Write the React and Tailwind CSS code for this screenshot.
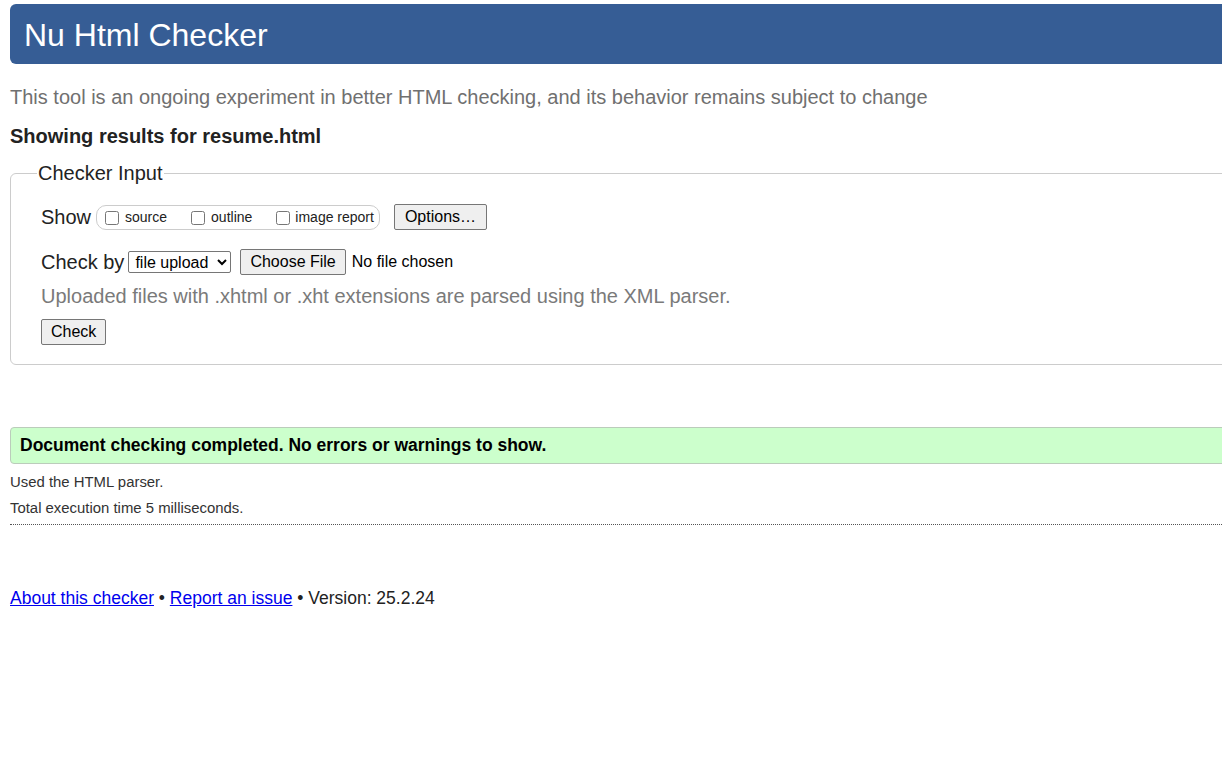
import React from "react";

const FONT = { fontFamily: '"Liberation Sans", Arial, sans-serif' };

export default function App() {
  return (
    <div className="w-[1222px] h-[763px] overflow-hidden bg-white" style={FONT}>
      <div className="w-[1260px] pl-[10px] pt-[4px]">

        {/* header */}
        <div className="h-[60px] bg-[#365d95] rounded-l-[6px] flex items-center pl-[14px]">
          <h1 className="text-[32px] text-white leading-none pt-[1px]">Nu Html Checker</h1>
        </div>

        <p className="mt-[22px] text-[20px] leading-[23px] text-[#707070]">
          This tool is an ongoing experiment in better HTML checking, and its behavior remains subject to change
        </p>

        <p className="mt-[16px] text-[20px] leading-[23px] font-bold text-[#222]">Showing results for resume.html</p>

        {/* checker input */}
        <fieldset className="mt-[14px] border border-[#cccccc] rounded-l-[6px] pl-[26px] pb-[19px] pt-[10px]">
          <legend className="px-[1px] text-[20px] leading-[23px] text-[#222]">Checker Input</legend>

          <div className="pl-[4px]">
            <div className="flex items-center h-[30px] mt-[7px]">
              <span className="text-[20px] text-[#222] mr-[5px]">Show</span>
              <div className="flex items-center h-[25px] border border-[#cccccc] rounded-[10px] pl-[8px] pr-[5px] text-[14px] text-[#222]">
                <label className="flex items-end mr-[24px]">
                  <input type="checkbox" className="w-[14px] h-[14px] m-0 mr-[6px] mb-[3px]" />
                  source
                </label>
                <label className="flex items-end mr-[24px]">
                  <input type="checkbox" className="w-[14px] h-[14px] m-0 mr-[6px] mb-[3px]" />
                  outline
                </label>
                <label className="flex items-end">
                  <input type="checkbox" className="w-[14px] h-[14px] m-0 mr-[5px] mb-[3px]" />
                  image report
                </label>
              </div>
              <button className="ml-[14px] h-[26px] px-[10px] text-[16px] text-black bg-[#efefef] border border-[#767676] rounded-[2px]">
                Options…
              </button>
            </div>

            <div className="flex items-center h-[30px] mt-[15px]">
              <span className="text-[20px] text-[#222] mr-[4px]">Check by</span>
              <select className="h-[22px] w-[103px] text-[16px] text-black border border-[#767676] rounded-[2px] bg-white pl-[2px]">
                <option>file upload</option>
              </select>
              <button className="ml-[9px] h-[26px] px-[9px] text-[16px] text-black bg-[#efefef] border border-[#767676] rounded-[2px]">
                Choose File
              </button>
              <span className="ml-[6px] text-[16px] text-black">No file chosen</span>
            </div>

            <p className="mt-[8px] text-[20px] leading-[23px] text-[#7a7a7a]">
              Uploaded files with .xhtml or .xht extensions are parsed using the XML parser.
            </p>

            <button className="mt-[11px] h-[26px] px-[9px] text-[16px] text-black bg-[#efefef] border border-[#767676] rounded-[2px]">
              Check
            </button>
          </div>
        </fieldset>

        {/* result */}
        <div className="mt-[62px] h-[37px] bg-[#ccffcc] border border-[#bbccbb] rounded-l-[4px] flex items-center pl-[9px]">
          <p className="text-[17.5px] font-bold text-black">Document checking completed. No errors or warnings to show.</p>
        </div>

        <p className="mt-[10px] text-[14.9px] leading-[16px] text-[#333]">Used the HTML parser.</p>
        <p className="mt-[10px] text-[14.9px] leading-[16px] text-[#333]">Total execution time 5 milliseconds.</p>
        <div className="mt-[8px] border-t border-dotted border-[#555]" />

        <p className="mt-[60px] text-[17.5px] text-[#222]">
          <a href="#" className="text-[#0000ee] underline">About this checker</a>
          {" • "}
          <a href="#" className="text-[#0000ee] underline">Report an issue</a>
          {" • Version: 25.2.24"}
        </p>
      </div>
    </div>
  );
}
